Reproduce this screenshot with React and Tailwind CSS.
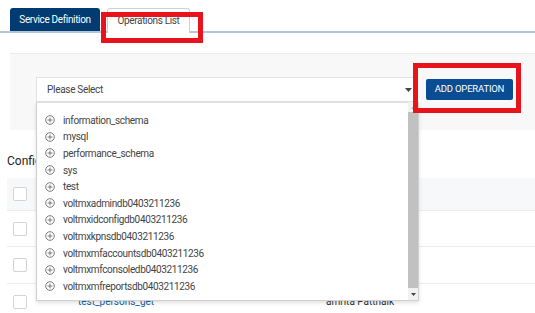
import React from "react";

const databases = [
  "information_schema",
  "mysql",
  "performance_schema",
  "sys",
  "test",
  "voltmxadmindb0403211236",
  "voltmxidconfigdb0403211236",
  "voltmxkpnsdb0403211236",
  "voltmxmfaccountsdb0403211236",
  "voltmxmfconsoledb0403211236",
  "voltmxmfreportsdb0403211236",
];

const PlusCircle = () => (
  <svg width="10" height="10" viewBox="0 0 10 10" className="shrink-0">
    <circle cx="5" cy="5" r="4.3" fill="none" stroke="#6b6b6b" strokeWidth="0.9" />
    <path d="M5 2.6v4.8M2.6 5h4.8" stroke="#6b6b6b" strokeWidth="0.9" />
  </svg>
);

const Checkbox = () => <div className="h-[14px] w-[14px] shrink-0 rounded-[2px] border border-[#d4d4d4] bg-white" />;

export default function App() {
  return (
    <div className="relative h-[313px] w-[535px] overflow-hidden bg-white font-['Roboto','Noto_Sans',sans-serif] text-[10px]">
      {/* Tabs */}
      <div className="flex items-end gap-[7px] border-b-2 border-[#b5c6d7] px-[10px] pt-[8px]">
        <div className="flex h-[23px] w-[90px] items-center justify-center rounded-t-[3px] bg-[#003c71] text-[10px] tracking-[-0.35px] text-white">
          Service Definition
        </div>
        <div className="-mb-[2px] flex h-[25px] w-[83px] items-center justify-center rounded-t-[3px] border border-b-0 border-[#c8d2dc] bg-white pb-[2px] text-[10px] tracking-[-0.35px] text-[#444]">
          Operations List
        </div>
      </div>

      {/* Filter panel */}
      <div className="ml-[10px] mt-[20px] flex h-[77px] items-start border-t border-[#ececec] bg-[#f8f8f8] pl-[26px] pt-[23px]">
        <div className="flex h-[25px] w-[382px] items-center justify-between border border-[#e2e2e2] bg-white pl-[10px] pr-[5px] text-[10px] tracking-[-0.3px] text-[#444]">
          <span>Please Select</span>
          <svg width="7" height="4" viewBox="0 0 7 4">
            <path d="M0 0h7L3.5 4z" fill="#444" />
          </svg>
        </div>
        <button className="ml-[8px] mt-[2px] flex h-[21px] w-[87px] items-center justify-center rounded-[2px] bg-[#0a4d92] text-[9.5px] tracking-[-0.2px] text-white">
          ADD OPERATION
        </button>
      </div>

      {/* Configured operations */}
      <div className="px-[7px] pt-[22px] text-[12px] text-[#222]">Configured Operations</div>
      <div className="ml-[7px] mt-[8px]">
        <div className="flex h-[32px] items-center bg-[#f7f8fa] pl-[6px]">
          <Checkbox />
        </div>
        <div className="flex h-[36px] items-center border-t border-[#ececec] pl-[6px]">
          <Checkbox />
        </div>
        <div className="flex h-[37px] items-center border-t border-[#ececec] pl-[6px]">
          <Checkbox />
        </div>
        <div className="flex h-[36px] items-center border-t border-[#ececec] pl-[6px]">
          <Checkbox />
          <span className="ml-[51px] text-[10px] text-[#1a5ea8]">test_persons_get</span>
          <span className="ml-[172px] text-[10px] text-[#333]">amrita Pattnaik</span>
        </div>
      </div>

      {/* Dropdown list */}
      <div className="absolute left-[36px] top-[102px] flex h-[199px] w-[383px] border border-t-0 border-[#d0d0d0] bg-white shadow-[0_2px_4px_rgba(0,0,0,0.12)]">
        <div className="flex-1 border-t border-[#e0e0e0] pl-[8px] pt-[9px]">
          {databases.map((db) => (
            <div key={db} className="flex h-[16.6px] items-center gap-[8px] text-[10px] tracking-[-0.35px] text-[#444]">
              <PlusCircle />
              <span>{db}</span>
            </div>
          ))}
        </div>
        <div className="flex w-[10px] flex-col bg-[#f1f1f1]">
          <div className="flex h-[10px] items-center justify-center">
            <svg width="5" height="3" viewBox="0 0 5 3">
              <path d="M0 3h5L2.5 0z" fill="#b0b0b0" />
            </svg>
          </div>
          <div className="flex-1 bg-[#c1c1c1]" />
          <div className="flex h-[12px] items-center justify-center">
            <svg width="5" height="3" viewBox="0 0 5 3">
              <path d="M0 0h5L2.5 3z" fill="#444" />
            </svg>
          </div>
        </div>
      </div>

      {/* Annotation boxes */}
      <div className="absolute left-[101px] top-[12px] h-[31px] w-[102px] border-[5px] border-[#e8131b]" />
      <div className="absolute left-[413px] top-[63px] h-[50px] w-[108px] border-[5px] border-[#e8131b]" />
    </div>
  );
}
